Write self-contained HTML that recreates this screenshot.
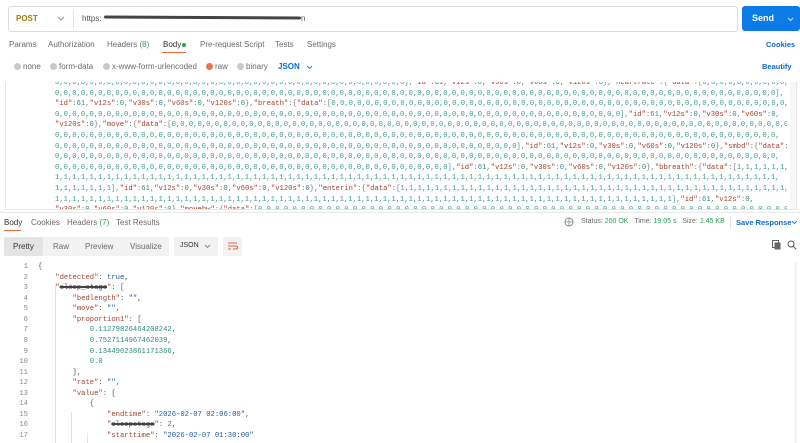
<!DOCTYPE html>
<html><head><meta charset="utf-8"><style>
*{margin:0;padding:0;box-sizing:border-box}
body{width:800px;height:443px;overflow:hidden;background:#fff;font-family:"Liberation Sans",sans-serif;font-size:8px;color:#6b6b6b;position:relative}
.a{position:absolute;white-space:nowrap}
.mono{font-family:"Liberation Mono",monospace;font-size:7.2px;white-space:pre}
k{color:#a3412f}
n{color:#2b8a80}
s{color:#1f5aa8;text-decoration:none}
.z{color:#3d9c8f}
.blue{color:#0b6bcb}
.dot{width:7px;height:7px;border-radius:50%;background:#c9c9c9;position:absolute;top:63px}
.red{background:#333;color:transparent;border-radius:2px}
</style></head><body>
<div class="a" style="left:8px;top:6px;width:730px;height:26px;border:1px solid #dcdcdc;border-radius:3px"></div>
<div class="a" style="left:16px;top:14px;color:#a8790c;font-weight:bold;font-size:8px">POST</div>
<svg class="a" style="left:57px;top:16px" width="8" height="6"><path d="M1 1l3 3 3-3" stroke="#999" fill="none"/></svg>
<div class="a" style="left:73px;top:10px;width:1px;height:18px;background:#e2e2e2"></div>
<div class="a" style="left:82px;top:14px;color:#555;font-size:8px">https:</div>
<div class="a" style="left:104px;top:16px;width:197px;height:3px;background:#444;border-radius:2px;transform:rotate(0.3deg)"></div>
<div class="a" style="left:301px;top:14px;color:#555;font-size:8px">n</div>
<div class="a" style="left:742px;top:6px;width:58px;height:25px;background:#0b7be8;border-radius:3px"></div>
<div class="a" style="left:752px;top:13px;color:#fff;font-weight:bold;font-size:9px">Send</div>
<svg class="a" style="left:787px;top:17px" width="7" height="5"><path d="M1 1l2.5 2.5 2.5-2.5" stroke="#cfe3fb" fill="none"/></svg>
<div class="a" style="left:9px;top:40px">Params</div>
<div class="a" style="left:48px;top:40px">Authorization</div>
<div class="a" style="left:107px;top:40px">Headers <span style="color:#3a9a5a">(8)</span></div>
<div class="a" style="left:163px;top:40px;color:#333">Body</div>
<div class="a" style="left:182px;top:43px;width:4px;height:4px;border-radius:50%;background:#2ea34c"></div>
<div class="a" style="left:162px;top:52px;width:24px;height:1px;background:#f26b3a"></div>
<div class="a" style="left:200px;top:40px">Pre-request Script</div>
<div class="a" style="left:275px;top:40px">Tests</div>
<div class="a" style="left:307px;top:40px">Settings</div>
<div class="a blue" style="left:766px;top:40px;font-weight:bold;font-size:7.5px">Cookies</div>
<div class="dot" style="left:14px"></div><div class="a" style="left:23px;top:62px">none</div>
<div class="dot" style="left:50px"></div><div class="a" style="left:59px;top:62px">form-data</div>
<div class="dot" style="left:103px"></div><div class="a" style="left:112px;top:62px">x-www-form-urlencoded</div>
<div class="dot" style="left:206px;background:#f0714a"></div><div class="a" style="left:215px;top:62px">raw</div>
<div class="dot" style="left:237px"></div><div class="a" style="left:246px;top:62px">binary</div>
<div class="a blue" style="left:278px;top:62px;font-weight:bold">JSON</div>
<svg class="a" style="left:306px;top:65px" width="7" height="5"><path d="M1 1l2.5 2.5 2.5-2.5" stroke="#3b7fd1" fill="none"/></svg>
<div class="a blue" style="left:762px;top:62px;font-weight:bold;font-size:7.5px">Beautify</div>
<div class="a" style="left:5px;top:82px;width:792px;height:128px;border:1px solid #e6e6e6;border-top:none;overflow:hidden">
<div class="a" style="right:0;top:0;width:6px;height:128px;background:#f7f7f7"></div>
<div class="a mono" style="left:49px;top:-4px;line-height:10.6px;color:#777;width:732px;overflow:hidden"><span class="z">0,0,0,0,0,0,0,0,0,0,0,0,0,0,0,0,0,0,0,0,0,0,0,0,0,0,0,0,0,0,0,0,0,0,0,0,0,0,0,0,0],</span><k>"id"</k>:<n>61</n>,<k>"v12s"</k>:<n>0</n>,<k>"v30s"</k>:<n>0</n>,<k>"v60s"</k>:<n>0</n>,<k>"v120s"</k>:<n>0</n>},<k>"heartrate"</k>:{<k>"data"</k>:[<span class="z">0,0,0,0,0,0,0,0,0,0,0,0,0,0,0,0,0,0,0,0,0,0,0,0,0,0,0,0,0,0,0,0,0,0,0,0,0,0,0,0,</span>
<span class="z">0,0,0,0,0,0,0,0,0,0,0,0,0,0,0,0,0,0,0,0,0,0,0,0,0,0,0,0,0,0,0,0,0,0,0,0,0,0,0,0,0,0,0,0,0,0,0,0,0,0,0,0,0,0,0,0,0,0,0,0,0,0,0,0,0,0,0,0,0,0,0,0,0,0,0,0,0,0,0,0,0,0,0,0],</span>
<k>"id"</k>:<n>61</n>,<k>"v12s"</k>:<n>0</n>,<k>"v30s"</k>:<n>0</n>,<k>"v60s"</k>:<n>0</n>,<k>"v120s"</k>:<n>0</n>},<k>"breath"</k>:{<k>"data"</k>:[<span class="z">0,0,0,0,0,0,0,0,0,0,0,0,0,0,0,0,0,0,0,0,0,0,0,0,0,0,0,0,0,0,0,0,0,0,0,0,0,0,0,0,0,0,0,0,0,0,0,0,0,0,0,0,0,0,0,0,0,0,0,0,0,0,0,0,0,</span>
<span class="z">0,0,0,0,0,0,0,0,0,0,0,0,0,0,0,0,0,0,0,0,0,0,0,0,0,0,0,0,0,0,0,0,0,0,0,0,0,0,0,0,0,0,0,0,0,0,0,0,0,0,0,0,0,0,0,0,0,0,0,0,0,0,0,0,0,0],</span><k>"id"</k>:<n>61</n>,<k>"v12s"</k>:<n>0</n>,<k>"v30s"</k>:<n>0</n>,<k>"v60s"</k>:<n>0</n>,
<k>"v120s"</k>:<n>0</n>},<k>"move"</k>:{<k>"data"</k>:[<span class="z">0,0,0,0,0,0,0,0,0,0,0,0,0,0,0,0,0,0,0,0,0,0,0,0,0,0,0,0,0,0,0,0,0,0,0,0,0,0,0,0,0,0,0,0,0,0,0,0,0,0,0,0,0,0,0,0,0,0,0,0,0,0,0,0,0,0,0,0,0,0,0,0,0,0,0,</span>
<span class="z">0,0,0,0,0,0,0,0,0,0,0,0,0,0,0,0,0,0,0,0,0,0,0,0,0,0,0,0,0,0,0,0,0,0,0,0,0,0,0,0,0,0,0,0,0,0,0,0,0,0,0,0,0,0,0,0,0,0,0,0,0,0,0,0,0,0,0,0,0,0,0,0,0,0,0,0,0,0,0,0,0,0,0,0,</span>
<span class="z">0,0,0,0,0,0,0,0,0,0,0,0,0,0,0,0,0,0,0,0,0,0,0,0,0,0,0,0,0,0,0,0,0,0,0,0,0,0,0,0,0,0,0,0,0,0,0,0,0,0,0,0,0,0],</span><k>"id"</k>:<n>61</n>,<k>"v12s"</k>:<n>0</n>,<k>"v30s"</k>:<n>0</n>,<k>"v60s"</k>:<n>0</n>,<k>"v120s"</k>:<n>0</n>},<k>"smbd"</k>:{<k>"data"</k>:[<span class="z">0,0,0,0,0,0,0,0,0,</span>
<span class="z">0,0,0,0,0,0,0,0,0,0,0,0,0,0,0,0,0,0,0,0,0,0,0,0,0,0,0,0,0,0,0,0,0,0,0,0,0,0,0,0,0,0,0,0,0,0,0,0,0,0,0,0,0,0,0,0,0,0,0,0,0,0,0,0,0,0,0,0,0,0,0,0,0,0,0,0,0,0,0,0,0,0,0,0,</span>
<span class="z">0,0,0,0,0,0,0,0,0,0,0,0,0,0,0,0,0,0,0,0,0,0,0,0,0,0,0,0,0,0,0,0,0,0,0,0,0,0,0,0,0,0,0,0,0,0],</span><k>"id"</k>:<n>61</n>,<k>"v12s"</k>:<n>0</n>,<k>"v30s"</k>:<n>0</n>,<k>"v60s"</k>:<n>0</n>,<k>"v120s"</k>:<n>0</n>},<k>"bbreath"</k>:{<k>"data"</k>:[<span class="z">1,1,1,1,1,1,1,1,1,1,1,1,1,1,1,1,1,1,1,1,1,1,1,1,1,1,1,1,1,</span>
<span class="z">1,1,1,1,1,1,1,1,1,1,1,1,1,1,1,1,1,1,1,1,1,1,1,1,1,1,1,1,1,1,1,1,1,1,1,1,1,1,1,1,1,1,1,1,1,1,1,1,1,1,1,1,1,1,1,1,1,1,1,1,1,1,1,1,1,1,1,1,1,1,1,1,1,1,1,1,1,1,1,1,1,1,1,1,</span>
<span class="z">1,1,1,1,1,1,1],</span><k>"id"</k>:<n>61</n>,<k>"v12s"</k>:<n>0</n>,<k>"v30s"</k>:<n>0</n>,<k>"v60s"</k>:<n>0</n>,<k>"v120s"</k>:<n>0</n>},<k>"enterin"</k>:{<k>"data"</k>:[<span class="z">1,1,1,1,1,1,1,1,1,1,1,1,1,1,1,1,1,1,1,1,1,1,1,1,1,1,1,1,1,1,1,1,1,1,1,1,1,1,1,1,1,1,1,1,1,1,1,1,1,</span>
<span class="z">1,1,1,1,1,1,1,1,1,1,1,1,1,1,1,1,1,1,1,1,1,1,1,1,1,1,1,1,1,1,1,1,1,1,1,1,1,1,1,1,1,1,1,1,1,1,1,1,1,1,1,1,1,1,1,1,1,1,1,1,1,1,1,1,1,1,1,1,1,1,1,1],</span><k>"id"</k>:<n>61</n>,<k>"v12s"</k>:<n>0</n>,
<k>"v30s"</k>:<n>0</n>,<k>"v60s"</k>:<n>0</n>,<k>"v120s"</k>:<n>0</n>},<k>"movehw"</k>:{<k>"data"</k>:[<span class="z">0,0,0,0,0,0,0,0,0,0,0,0,0,0,0,0,0,0,0,0,0,0,0,0,0,0,0,0,0,0,0,0,0,0,0,0,0,0,0,0,0,0,0,0,0,0,0,0,0,0,0,0,0,0,0,0,0,0,0,0,0,0,0,0,0,0,0,0,0,0,0,0,0,0,</span>
<span class="z">0,0,0,0,0,0,0,0,0,0,0,0,0,0,0,0,0,0,0,0,0,0,0,0,0,0,0,0,0,0,0,0,0,0,0,0,0,0,0,0,0,0,0,0,0,0,0,0,0,0,0,0,0,0,0,0,0,0,0,0,0,0,0,0,0,0,0,0,0,0,0,0,0,0,0,0,0,0,0,0,0,0,0,0,</span></div>
</div>
<div class="a" style="left:0;top:212px;width:800px;height:1px;background:#e8e8e8"></div>
<div class="a" style="left:4px;top:218px;color:#333">Body</div>
<div class="a" style="left:4px;top:230px;width:17px;height:1px;background:#f26b3a"></div>
<div class="a" style="left:31px;top:218px">Cookies</div>
<div class="a" style="left:67px;top:218px">Headers <span style="color:#3a9a5a">(7)</span></div>
<div class="a" style="left:116px;top:218px">Test Results</div>
<svg class="a" style="left:564px;top:217px" width="10" height="10"><circle cx="5" cy="5" r="4" fill="none" stroke="#888"/><path d="M1 5h8M5 1v8" stroke="#888" stroke-width=".8"/></svg>
<div class="a" style="left:581px;top:218px;font-size:7px">Status: <span style="color:#2e9a56">200 OK</span> &nbsp;&nbsp;Time: <span style="color:#2e9a56">19.05 s</span> &nbsp;&nbsp;Size: <span style="color:#2e9a56">1.45 KB</span></div>
<div class="a" style="left:730px;top:216px;width:1px;height:12px;background:#e2e2e2"></div>
<div class="a blue" style="left:736px;top:218px;font-weight:bold;font-size:7.5px">Save Response</div>
<svg class="a" style="left:791px;top:220px" width="7" height="5"><path d="M1 1l2.5 2.5 2.5-2.5" stroke="#3b7fd1" fill="none"/></svg>
<div class="a" style="left:4px;top:237px;width:165px;height:19px;background:#f2f2f2;border-radius:2px"></div>
<div class="a" style="left:4px;top:237px;width:39px;height:19px;background:#e4e4e4;border-radius:2px"></div>
<div class="a" style="left:13px;top:242px;color:#333">Pretty</div>
<div class="a" style="left:53px;top:242px">Raw</div>
<div class="a" style="left:85px;top:242px">Preview</div>
<div class="a" style="left:130px;top:242px">Visualize</div>
<div class="a" style="left:174px;top:237px;width:44px;height:19px;background:#f2f2f2;border-radius:2px"></div>
<div class="a" style="left:180px;top:242px;color:#333;font-size:7px">JSON</div>
<svg class="a" style="left:204px;top:244px" width="7" height="5"><path d="M1 1l2.5 2.5 2.5-2.5" stroke="#888" fill="none"/></svg>
<div class="a" style="left:223px;top:237px;width:19px;height:19px;background:#f2f2f2;border-radius:2px"></div>
<svg class="a" style="left:227px;top:241px" width="11" height="10"><path d="M1 2h9M1 5h8a1.5 1.5 0 010 3H6M1 8h3" stroke="#e8603a" fill="none"/></svg>
<svg class="a" style="left:772px;top:240px" width="10" height="10"><rect x="0.5" y="0.5" width="6" height="7" fill="none" stroke="#666"/><rect x="2.5" y="2.5" width="6" height="7" fill="#666"/></svg>
<svg class="a" style="left:787px;top:240px" width="10" height="10"><circle cx="4" cy="4" r="3" fill="none" stroke="#555"/><path d="M6.3 6.3l3 3" stroke="#555"/></svg>
<div class="a" style="left:794px;top:262px;width:3px;height:181px;background:#f3f3f3"></div>
<div class="a mono" style="left:14px;top:262px;line-height:10.56px;color:#888;text-align:right;width:14px">1
2
3
4
5
6
7
8
9
10
11
12
13
14
15
16
17</div>
<div class="a" style="left:55px;top:285px;width:1px;height:158px;background:#e4e4e4"></div>
<div class="a" style="left:71px;top:412px;width:1px;height:31px;background:#e4e4e4"></div>
<div class="a" style="left:87px;top:433px;width:1px;height:10px;background:#e4e4e4"></div>
<div class="a mono" style="left:38px;top:262px;line-height:10.56px;color:#555">{
    <k>"detected"</k>: <s>true</s>,
    <k>"<span style="color:#444;text-decoration:line-through;text-decoration-thickness:2px">sleep_stage</span>"</k>: [
        <k>"bedlength"</k>: <s>""</s>,
        <k>"move"</k>: <s>""</s>,
        <k>"proportion1"</k>: [
            <n>0.11279826464208242</n>,
            <n>0.7527114967462039</n>,
            <n>0.13449023861171366</n>,
            <n>0.0</n>
        ],
        <k>"rate"</k>: <s>""</s>,
        <k>"value"</k>: [
            {
                <k>"endtime"</k>: <s>"2026-02-07 02:06:00"</s>,
                <k>"<span style="color:#444;text-decoration:line-through;text-decoration-thickness:2px">sleepstage</span>"</k>: <n>2</n>,
                <k>"starttime"</k>: <s>"2026-02-07 01:30:00"</s></div>
</body></html>
